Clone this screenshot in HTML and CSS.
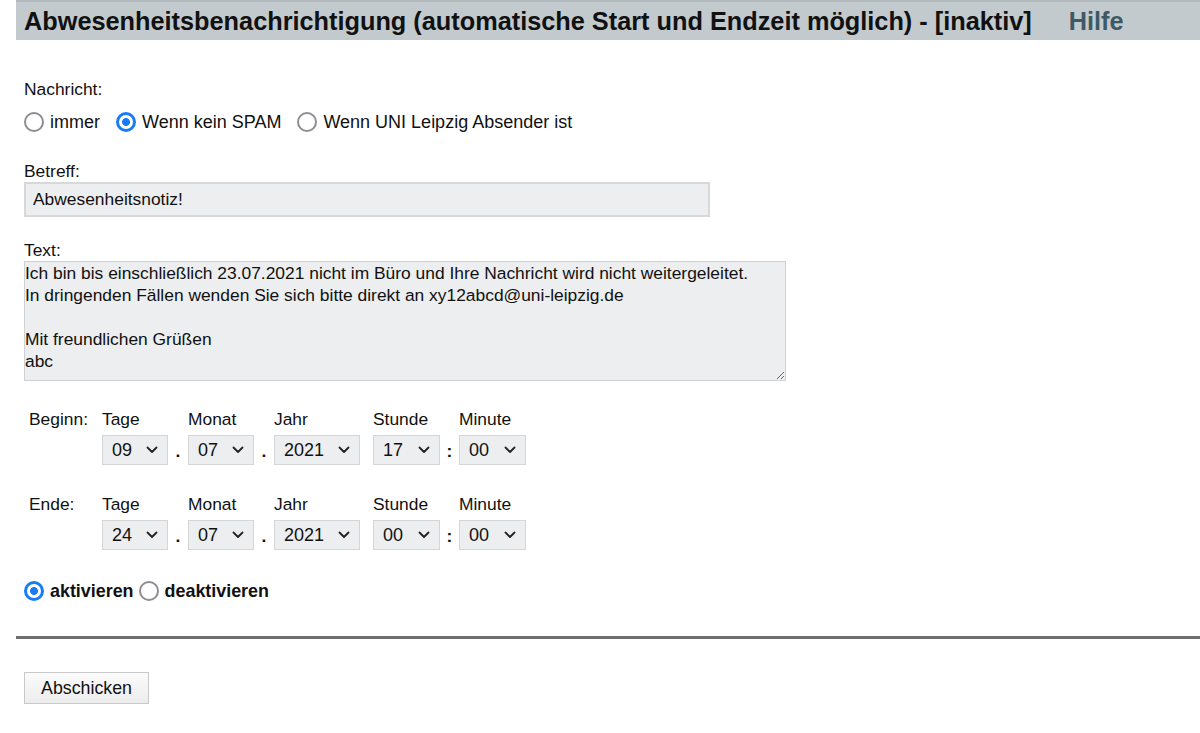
FILE: index.html
```html
<!DOCTYPE html>
<html lang="de">
<head>
<meta charset="utf-8">
<title>Abwesenheitsbenachrichtigung</title>
<link rel="stylesheet" href="styles.css">
</head>
<body>
<div class="header">
  <span class="title">Abwesenheitsbenachrichtigung (automatische Start und Endzeit möglich) - [inaktiv]</span>
  <a class="help" href="#">Hilfe</a>
</div>
<form class="content">
  <div class="label first">Nachricht:</div>
  <div class="radio-row">
    <label class="opt"><input type="radio" name="m" class="radio"> immer</label>
    <label class="opt"><input type="radio" name="m" class="radio" checked> Wenn kein SPAM</label>
    <label class="opt"><input type="radio" name="m" class="radio"> Wenn UNI Leipzig Absender ist</label>
  </div>

  <div class="label betreff">Betreff:</div>
  <input class="text-input" type="text" value="Abwesenheitsnotiz!">

  <div class="label textlabel">Text:</div>
  <textarea class="textarea">Ich bin bis einschließlich 23.07.2021 nicht im Büro und Ihre Nachricht wird nicht weitergeleitet.
In dringenden Fällen wenden Sie sich bitte direkt an xy12abcd@uni-leipzig.de

Mit freundlichen Grüßen
abc</textarea>

  <div class="dates begin">
    <div class="dlabel">Beginn:</div>
    <div class="col-t">Tage</div>
    <div class="col-m">Monat</div>
    <div class="col-j">Jahr</div>
    <div class="col-s">Stunde</div>
    <div class="col-min">Minute</div>

    <div class="sel col-t"><span>09</span><svg class="chev" viewBox="0 0 12 8"><path d="M1.5 1.5 6 6 10.5 1.5"/></svg></div>
    <div class="sep dot1">.</div>
    <div class="sel col-m"><span>07</span><svg class="chev" viewBox="0 0 12 8"><path d="M1.5 1.5 6 6 10.5 1.5"/></svg></div>
    <div class="sep dot2">.</div>
    <div class="sel col-j"><span>2021</span><svg class="chev" viewBox="0 0 12 8"><path d="M1.5 1.5 6 6 10.5 1.5"/></svg></div>
    <div class="sel col-s"><span>17</span><svg class="chev" viewBox="0 0 12 8"><path d="M1.5 1.5 6 6 10.5 1.5"/></svg></div>
    <div class="sep colon">:</div>
    <div class="sel col-min"><span>00</span><svg class="chev" viewBox="0 0 12 8"><path d="M1.5 1.5 6 6 10.5 1.5"/></svg></div>
  </div>

  <div class="dates end">
    <div class="dlabel">Ende:</div>
    <div class="col-t">Tage</div>
    <div class="col-m">Monat</div>
    <div class="col-j">Jahr</div>
    <div class="col-s">Stunde</div>
    <div class="col-min">Minute</div>

    <div class="sel col-t"><span>24</span><svg class="chev" viewBox="0 0 12 8"><path d="M1.5 1.5 6 6 10.5 1.5"/></svg></div>
    <div class="sep dot1">.</div>
    <div class="sel col-m"><span>07</span><svg class="chev" viewBox="0 0 12 8"><path d="M1.5 1.5 6 6 10.5 1.5"/></svg></div>
    <div class="sep dot2">.</div>
    <div class="sel col-j"><span>2021</span><svg class="chev" viewBox="0 0 12 8"><path d="M1.5 1.5 6 6 10.5 1.5"/></svg></div>
    <div class="sel col-s"><span>00</span><svg class="chev" viewBox="0 0 12 8"><path d="M1.5 1.5 6 6 10.5 1.5"/></svg></div>
    <div class="sep colon">:</div>
    <div class="sel col-min"><span>00</span><svg class="chev" viewBox="0 0 12 8"><path d="M1.5 1.5 6 6 10.5 1.5"/></svg></div>
  </div>

  <div class="activate">
    <label class="opt bold"><input type="radio" name="a" class="radio" checked>aktivieren</label>
    <label class="opt bold"><input type="radio" name="a" class="radio">deaktivieren</label>
  </div>
</form>
<div class="rule"></div>
<div class="submit-wrap">
  <button class="submit" type="button">Abschicken</button>
</div>
</body>
</html>
```

FILE: styles.css
```css
html, body {
  margin: 0;
  padding: 0;
  background: #ffffff;
}

body {
  font-family: "Liberation Sans", Arial, Helvetica, sans-serif;
  font-size: 17.4px;
  line-height: 20px;
  color: #111111;
  overflow: hidden;
}

.header {
  margin-left: 16px;
  height: 40px;
  background: #c2cacd;
  border-top: 2px solid #b3bbbe;
  box-sizing: border-box;
  display: flex;
  align-items: center;
  padding-left: 8px;
  white-space: nowrap;
}

.title {
  font-weight: bold;
  font-size: 25.3px;
  color: #111111;
}

.help {
  margin-left: 37px;
  font-weight: bold;
  font-size: 25.3px;
  color: #3e5966;
  text-decoration: none;
}

.content {
  padding-left: 24px;
  margin: 0;
}

.label {
  height: 20px;
}

.label.first {
  margin-top: 39px;
}

.radio-row {
  margin-top: 13px;
  display: flex;
  align-items: center;
  gap: 16px;
  height: 20px;
  font-size: 18px;
}

.opt {
  display: flex;
  align-items: center;
  gap: 6px;
  height: 20px;
}

.radio {
  appearance: none;
  -webkit-appearance: none;
  margin: 0;
  width: 20px;
  height: 20px;
  box-sizing: border-box;
  border-radius: 50%;
  border: 2px solid #8d8d93;
  background: #ffffff;
  flex: none;
}

.radio:checked {
  border: 3px solid #1a7cf5;
  background: radial-gradient(circle, #1a7cf5 0 3.6px, #ffffff 4.2px);
}

.betreff {
  margin-top: 29px;
}

.text-input {
  display: block;
  margin: 1px 0 0 0;
  width: 686px;
  height: 35px;
  box-sizing: border-box;
  border: 2px solid #d6d8d9;
  background: #eceeef;
  padding: 0 0 0 7px;
  font-family: inherit;
  font-size: 17.4px;
  color: #111111;
  outline: none;
}

.textlabel {
  margin-top: 23px;
}

.textarea {
  display: block;
  margin: 1px 0 0 0;
  width: 762px;
  height: 120px;
  box-sizing: border-box;
  border: 1px solid #cfd1d2;
  background: #eceeef;
  padding: 0;
  font-family: inherit;
  font-size: 17.4px;
  line-height: 22px;
  color: #111111;
  resize: both;
  overflow: hidden;
  outline: none;
}

.dates {
  display: grid;
  grid-template-columns: 78px 66px 20px 66px 20px 86px 13px 67px 19px 67px;
  grid-template-rows: 20px 30px;
  row-gap: 6px;
  align-items: center;
}

.dates.begin {
  margin-top: 28px;
}

.dates.end {
  margin-top: 29px;
}

.dlabel {
  grid-column: 1;
  grid-row: 1;
  padding-left: 5px;
}

.col-t { grid-column: 2; }
.col-m { grid-column: 4; }
.col-j { grid-column: 6; }
.col-s { grid-column: 8; }
.col-min { grid-column: 10; }

.sep {
  grid-row: 2;
  text-align: center;
  font-weight: bold;
  line-height: 30px;
  padding-top: 2px;
}

.dot1 { grid-column: 3; }
.dot2 { grid-column: 5; }
.colon { grid-column: 9; }

.sel {
  grid-row: 2;
  height: 30px;
  box-sizing: border-box;
  border: 1px solid #d3d5d6;
  background: #eceeef;
  display: flex;
  align-items: center;
  justify-content: space-between;
  padding: 0 9px 0 9px;
  font-size: 18px;
}

.chev {
  width: 12px;
  height: 8px;
  fill: none;
  stroke: #222222;
  stroke-width: 1.8;
  stroke-linecap: round;
  stroke-linejoin: round;
}

.activate {
  margin-top: 31px;
  display: flex;
  align-items: center;
  gap: 5px;
  height: 20px;
  font-size: 17.9px;
}

.activate .opt {
  gap: 6px;
}

.bold {
  font-weight: bold;
}

.rule {
  margin: 35px 0 0 16px;
  height: 3px;
  background: #6f6f6f;
}

.submit-wrap {
  padding-left: 24px;
  margin-top: 33px;
}

.submit {
  width: 125px;
  height: 32px;
  box-sizing: border-box;
  border: 1px solid #c9c9c9;
  background: linear-gradient(#fbfbfb, #ececec);
  font-family: inherit;
  font-size: 17.8px;
  color: #111111;
  padding: 0;
}
```
